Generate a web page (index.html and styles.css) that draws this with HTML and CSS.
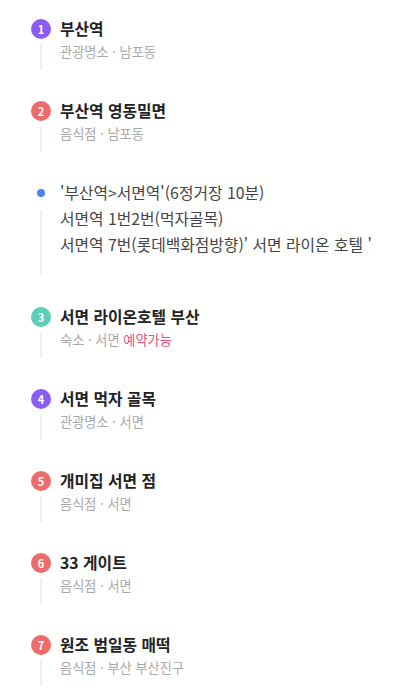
FILE: index.html
```html
<!DOCTYPE html>
<html lang="ko">
<head>
<meta charset="utf-8">
<link rel="stylesheet" href="styles.css">
</head>
<body>
<div class="timeline">
  <div class="item">
    <div class="rail"><span class="num purple">1</span><span class="line"></span></div>
    <div class="body"><div class="title">부산역</div><div class="sub">관광명소 · 남포동</div></div>
  </div>
  <div class="item">
    <div class="rail"><span class="num red">2</span><span class="line"></span></div>
    <div class="body"><div class="title">부산역 영동밀면</div><div class="sub">음식점 · 남포동</div></div>
  </div>
  <div class="item note">
    <div class="rail"><span class="dotbox"><span class="dot"></span></span><span class="line"></span></div>
    <div class="body">
      <div class="memo">'부산역&gt;서면역'(6정거장 10분)</div>
      <div class="memo">서면역 1번2번(먹자골목)</div>
      <div class="memo">서면역 7번(롯데백화점방향)' 서면 라이온 호텔 '</div>
    </div>
  </div>
  <div class="item">
    <div class="rail"><span class="num teal">3</span><span class="line"></span></div>
    <div class="body"><div class="title">서면 라이온호텔 부산</div><div class="sub">숙소 · 서면 <span class="avail">예약가능</span></div></div>
  </div>
  <div class="item">
    <div class="rail"><span class="num purple">4</span><span class="line"></span></div>
    <div class="body"><div class="title">서면 먹자 골목</div><div class="sub">관광명소 · 서면</div></div>
  </div>
  <div class="item">
    <div class="rail"><span class="num red">5</span><span class="line"></span></div>
    <div class="body"><div class="title">개미집 서면 점</div><div class="sub">음식점 · 서면</div></div>
  </div>
  <div class="item">
    <div class="rail"><span class="num red">6</span><span class="line"></span></div>
    <div class="body"><div class="title">33 게이트</div><div class="sub">음식점 · 서면</div></div>
  </div>
  <div class="item">
    <div class="rail"><span class="num red">7</span><span class="line"></span></div>
    <div class="body"><div class="title">원조 범일동 매떡</div><div class="sub">음식점 · 부산 부산진구</div></div>
  </div>
</div>
</body>
</html>
```

FILE: styles.css
```css
* { box-sizing: border-box; }
html, body { margin: 0; padding: 0; background: #fff; }
body {
  font-family: "Noto Sans CJK KR", "Noto Sans", sans-serif;
  color: #222;
  width: 416px;
  height: 700px;
  overflow: hidden;
}
.timeline {
  padding: 19px 0 0 31px;
  display: flex;
  flex-direction: column;
}
.item {
  display: grid;
  grid-template-columns: 20px 1fr;
  column-gap: 9px;
  margin-bottom: 31px;
}
.item.note {
  margin-top: -3px;
  margin-bottom: 32px;
}
.rail {
  display: flex;
  flex-direction: column;
  align-items: center;
}
.num {
  width: 20px;
  height: 20px;
  border-radius: 50%;
  color: #fff;
  font-size: 11px;
  font-weight: 700;
  line-height: 20px;
  text-align: center;
  flex: none;
}
.purple { background: #8b5cf6; }
.red { background: #ee6b6b; }
.teal { background: #5ccdb8; }
.dotbox {
  height: 26px;
  display: flex;
  align-items: center;
  flex: none;
}
.dot {
  width: 8px;
  height: 8px;
  border-radius: 50%;
  background: #4a84f0;
}
.line {
  flex: 1;
  width: 2px;
  background: #f0f0f0;
  margin-top: 5px;
}
.note .line { margin-top: 4px; }
.body { padding-bottom: 9px; }
.note .body { padding-bottom: 17px; }
.title {
  font-size: 15.8px;
  font-weight: 700;
  line-height: 20px;
  color: #222;
}
.sub {
  margin-top: 4px;
  font-size: 13.2px;
  line-height: 18px;
  color: #a8a8a8;
}
.avail { color: #e8507a; }
.memo {
  font-size: 15.8px;
  line-height: 26px;
  color: #444;
}
```
